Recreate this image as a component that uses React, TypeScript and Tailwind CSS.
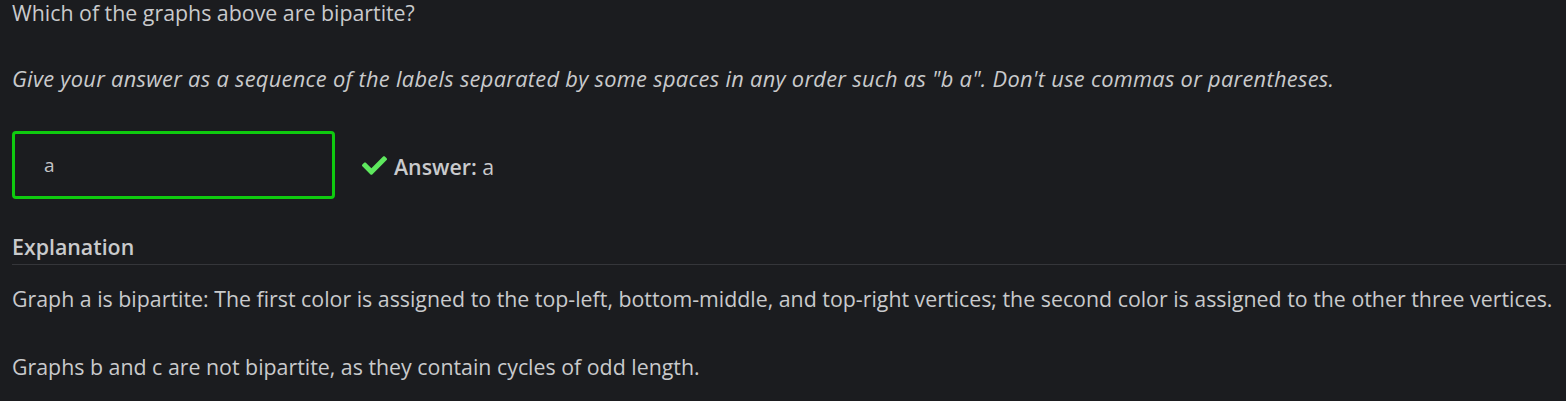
import { FaCheck } from "react-icons/fa";

/**
 * Quiz answer block — question, answer input with result, and explanation
 */
export default function App() {
  return (
    <div className="min-h-screen bg-[#1b1c1f] pl-3 text-[#c9cacc] font-['Open_Sans','Noto_Sans',sans-serif] text-[21.35px] leading-[26px]">
      <p className="whitespace-nowrap">Which of the graphs above are bipartite?</p>

      <p className="mt-[40px] whitespace-nowrap italic text-[21.8px] tracking-[0.3px]">
        Give your answer as a sequence of the labels separated by some spaces in any order such as "b a". Don't use
        commas or parentheses.
      </p>

      <div className="mt-[39px] flex items-center">
        <input
          type="text"
          readOnly
          value="a"
          className="h-[68px] w-[323px] rounded-[4px] border-[3px] border-[#0fcb0f] bg-transparent pl-[29px] text-[19px] text-[#c3c4c6] outline-none"
        />
        <FaCheck className="ml-[27px] h-[25px] w-[25px] text-[#5ee85e]" />
        <span className="ml-[7px] mt-[3px] whitespace-nowrap">
          <span className="font-semibold">Answer:</span> a
        </span>
      </div>

      <div className="mt-[35px] border-b border-[#35363a] pb-[4px]">
        <h3 className="font-semibold">Explanation</h3>
      </div>

      <p className="mt-[21px] whitespace-nowrap">
        Graph a is bipartite: The first color is assigned to the top-left, bottom-middle, and top-right vertices; the
        second color is assigned to the other three vertices.
      </p>
      <p className="mt-[42px] whitespace-nowrap">Graphs b and c are not bipartite, as they contain cycles of odd length.</p>
    </div>
  );
}
